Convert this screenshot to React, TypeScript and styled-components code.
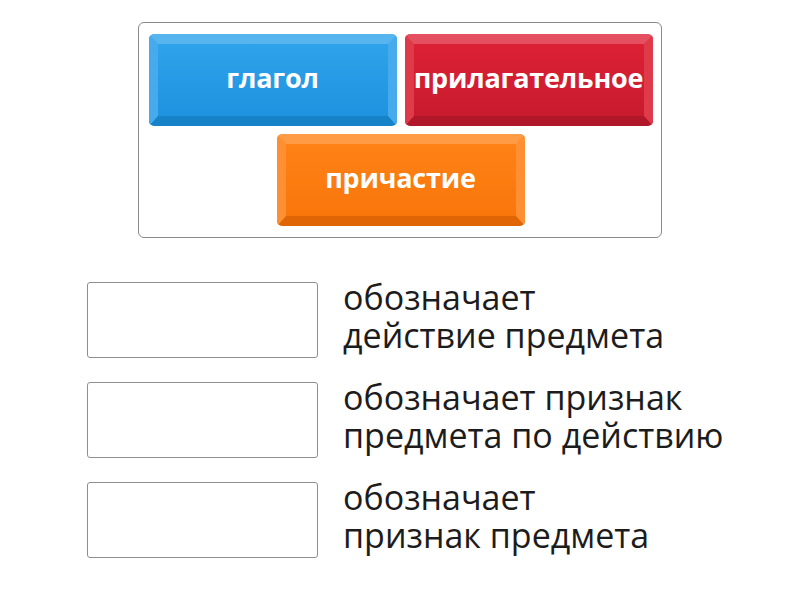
import styled, { createGlobalStyle } from "styled-components";

const GlobalStyle = createGlobalStyle`
  html, body {
    margin: 0;
    padding: 0;
    background: #ffffff;
    font-family: "Open Sans", "Liberation Sans", sans-serif;
  }
`;

type Tone = "blue" | "red" | "orange";

const tones: Record<Tone, { face: string; faceEnd: string; light: string; side: string; dark: string }> = {
  blue: { face: "#2ea2ea", faceEnd: "#1f93df", light: "#56b4ef", side: "#45abec", dark: "#1683c9" },
  red: { face: "#dc2035", faceEnd: "#c91b2e", light: "#e4505f", side: "#df3a4a", dark: "#b0182a" },
  orange: { face: "#ff8216", faceEnd: "#f9760b", light: "#ff9a45", side: "#ff8f33", dark: "#e06504" },
};

const words: { label: string; tone: Tone }[] = [
  { label: "глагол", tone: "blue" },
  { label: "прилагательное", tone: "red" },
  { label: "причастие", tone: "orange" },
];

const definitions = [
  ["обозначает", "действие предмета"],
  ["обозначает признак", "предмета по действию"],
  ["обозначает", "признак предмета"],
];

function App() {
  return (
    <>
      <GlobalStyle />
      <Page>
        <Bank>
          {words.map((w) => (
            <Tile key={w.label} $tone={w.tone}>
              {w.label}
            </Tile>
          ))}
        </Bank>
        <Targets>
          {definitions.map((lines) => (
            <Row key={lines.join(" ")}>
              <Slot />
              <Definition>
                {lines.map((l) => (
                  <span key={l}>{l}</span>
                ))}
              </Definition>
            </Row>
          ))}
        </Targets>
      </Page>
    </>
  );
}

const Page = styled.div`
  width: 800px;
  height: 600px;
  padding-top: 22px;
  box-sizing: border-box;
  display: flex;
  flex-direction: column;
  align-items: center;
`;

const Bank = styled.div`
  width: 524px;
  box-sizing: border-box;
  border: 1px solid #8a8a8a;
  border-radius: 6px;
  padding: 11px 0 11px 1px;
  display: flex;
  flex-wrap: wrap;
  justify-content: center;
  gap: 8px;
`;

const Tile = styled.div<{ $tone: Tone }>`
  width: 248px;
  height: 92px;
  box-sizing: border-box;
  border-radius: 5px;
  border-style: solid;
  border-width: 10px 9px 10px 9px;
  border-color: ${(p) => tones[p.$tone].light} ${(p) => tones[p.$tone].side}
    ${(p) => tones[p.$tone].dark} ${(p) => tones[p.$tone].side};
  background: linear-gradient(
    ${(p) => tones[p.$tone].face},
    ${(p) => tones[p.$tone].faceEnd}
  );
  display: flex;
  align-items: center;
  justify-content: center;
  padding-bottom: 5px;
  color: #ffffff;
  font-weight: 700;
  font-size: 27px;
  white-space: nowrap;
  letter-spacing: -0.2px;
`;

const Targets = styled.div`
  align-self: stretch;
  margin-top: 44px;
  padding-left: 87px;
  display: flex;
  flex-direction: column;
  gap: 24px;
`;

const Row = styled.div`
  display: flex;
  align-items: center;
  gap: 25px;
`;

const Slot = styled.div`
  width: 231px;
  height: 76px;
  flex: none;
  box-sizing: border-box;
  border: 1px solid #8f8f8f;
  border-radius: 3px;
  background: #ffffff;
`;

const Definition = styled.div`
  display: flex;
  flex-direction: column;
  margin-top: -8px;
  font-size: 34px;
  line-height: 38px;
  color: #1c1c1c;
  white-space: nowrap;
`;

export default App;
